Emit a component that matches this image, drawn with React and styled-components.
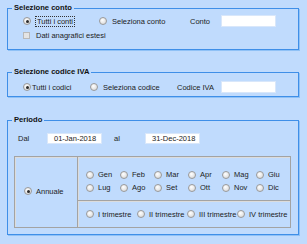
import styled, { createGlobalStyle } from "styled-components";

const GlobalStyle = createGlobalStyle`
  html, body {
    margin: 0;
    padding: 0;
    background-color: #c0dbfd;
  }
  body {
    font-family: "Liberation Sans", Arial, sans-serif;
    font-size: 7.5px;
    color: #1c1c1c;
  }
`;

const Page = styled.div`
  width: 307px;
  height: 244px;
  box-sizing: border-box;
  padding: 3px 8px 0 7px;
  display: flex;
  flex-direction: column;
`;

const Group = styled.fieldset`
  margin: 0 0 ${(p) => p.$gap || 0}px 0;
  padding: 0 0 ${(p) => p.$bottom || 0}px 0;
  border: 1px solid #3f8fe8;
  box-shadow: 1px 1px 0 #8fc1f6;
  min-width: 0;
`;

const Legend = styled.legend`
  margin-left: 4px;
  padding: 0 2px;
  font-weight: bold;
  font-size: 7.6px;
  line-height: 10px;
  color: #111;
`;

const Row = styled.div`
  display: flex;
  align-items: center;
  height: ${(p) => p.$h || 12}px;
  margin-top: ${(p) => p.$top || 0}px;
  padding-left: ${(p) => p.$left || 0}px;
`;

const Option = styled.label`
  display: flex;
  align-items: center;
  width: ${(p) => (p.$w ? `${p.$w}px` : "auto")};
  flex-shrink: 0;
  white-space: nowrap;
`;

const Radio = styled.span`
  width: 8px;
  height: 8px;
  box-sizing: border-box;
  border-radius: 50%;
  border: 1px solid #9a9a9a;
  background: radial-gradient(circle at 40% 35%, #ffffff 0%, #e6e6e6 55%, #cfcfcf 100%);
  margin-right: ${(p) => p.$gap || 4}px;
  flex-shrink: 0;
  display: flex;
  align-items: center;
  justify-content: center;
  &::after {
    content: "";
    width: 3px;
    height: 3px;
    border-radius: 50%;
    background: ${(p) => (p.$checked ? "#2b2b2b" : "transparent")};
  }
`;

const Check = styled.span`
  width: 7px;
  height: 7px;
  box-sizing: border-box;
  border: 1px solid #b9b9b9;
  background: #e4e4e4;
  margin-right: 6px;
  flex-shrink: 0;
`;

const Focus = styled.span`
  outline: 1px dotted #333;
  outline-offset: 0;
  padding: 0 1px;
  margin-left: -1px;
`;

const Label = styled.span`
  width: ${(p) => p.$w}px;
  flex-shrink: 0;
  white-space: nowrap;
`;

const Field = styled.div`
  width: ${(p) => p.$w || 55}px;
  height: ${(p) => p.$h || 12}px;
  box-sizing: border-box;
  background: #fff;
  border: 1px solid #d9e7fa;
  padding-left: 6px;
  display: flex;
  align-items: center;
  flex-shrink: 0;
  font-size: 7.5px;
`;

const Panels = styled.div`
  display: flex;
  margin: 12px 0 0 6px;
  width: 277px;
  height: 72px;
`;

const Panel = styled.div`
  box-sizing: border-box;
  border: 1px solid #a3a3a3;
  box-shadow: inset 1px 1px 0 #dcdcdc;
  width: ${(p) => (p.$w ? `${p.$w}px` : "auto")};
  height: ${(p) => (p.$h ? `${p.$h}px` : "auto")};
  display: flex;
  flex-shrink: 0;
`;

const AnnualPanel = styled(Panel)`
  align-items: center;
  padding: 0 0 2px 9px;
  margin-right: -1px;
`;

const Stack = styled.div`
  display: flex;
  flex-direction: column;
  flex: 1;
`;

const MonthGrid = styled(Panel)`
  display: grid;
  grid-template-columns: repeat(6, 34px);
  grid-auto-rows: 13px;
  align-items: center;
  align-content: start;
  padding: 11px 0 0 8px;
  margin-bottom: -1px;
`;

const QuarterRow = styled(Panel)`
  align-items: center;
  padding: 0 0 0 8px;
`;

const months = ["Gen", "Feb", "Mar", "Apr", "Mag", "Giu", "Lug", "Ago", "Set", "Ott", "Nov", "Dic"];
const quarters = [
  { name: "I trimestre", w: 51 },
  { name: "II trimestre", w: 50 },
  { name: "III trimestre", w: 50 },
  { name: "IV trimestre", w: 0 },
];

export default function App() {
  return (
    <Page>
      <GlobalStyle />
      <Group $gap={17} $bottom={9}>
        <Legend>Selezione conto</Legend>
        <Row $top={2} $left={15}>
          <Option $w={76}>
            <Radio $checked $gap={6} />
            <Focus>Tutti i conti</Focus>
          </Option>
          <Option $w={91}>
            <Radio $gap={5} />
            Seleziona conto
          </Option>
          <Label $w={31}>Conto</Label>
          <Field />
        </Row>
        <Row $top={3} $h={10} $left={15}>
          <Option>
            <Check />
            Dati anagrafici estesi
          </Option>
        </Row>
      </Group>

      <Group $gap={18} $bottom={3}>
        <Legend>Selezione codice IVA</Legend>
        <Row $top={4} $left={15}>
          <Option $w={67}>
            <Radio $checked $gap={1} />
            Tutti i codici
          </Option>
          <Option $w={87}>
            <Radio $gap={5} />
            Seleziona codice
          </Option>
          <Label $w={44}>Codice IVA</Label>
          <Field />
        </Row>
      </Group>

      <Group $bottom={6}>
        <Legend>Periodo</Legend>
        <Row $top={8} $h={11} $left={10}>
          <Label $w={29}>Dal</Label>
          <Field $h={11}>01-Jan-2018</Field>
          <Label $w={31} style={{ paddingLeft: 12 }}>al</Label>
          <Field $h={11}>31-Dec-2018</Field>
        </Row>
        <Panels>
          <AnnualPanel $w={64}>
            <Option>
              <Radio $checked $gap={4} />
              Annuale
            </Option>
          </AnnualPanel>
          <Stack>
            <MonthGrid $h={45}>
              {months.map((m) => (
                <Option key={m}>
                  <Radio />
                  {m}
                </Option>
              ))}
            </MonthGrid>
            <QuarterRow $h={28}>
              {quarters.map((q) => (
                <Option key={q.name} $w={q.w || undefined}>
                  <Radio />
                  {q.name}
                </Option>
              ))}
            </QuarterRow>
          </Stack>
        </Panels>
      </Group>
    </Page>
  );
}
